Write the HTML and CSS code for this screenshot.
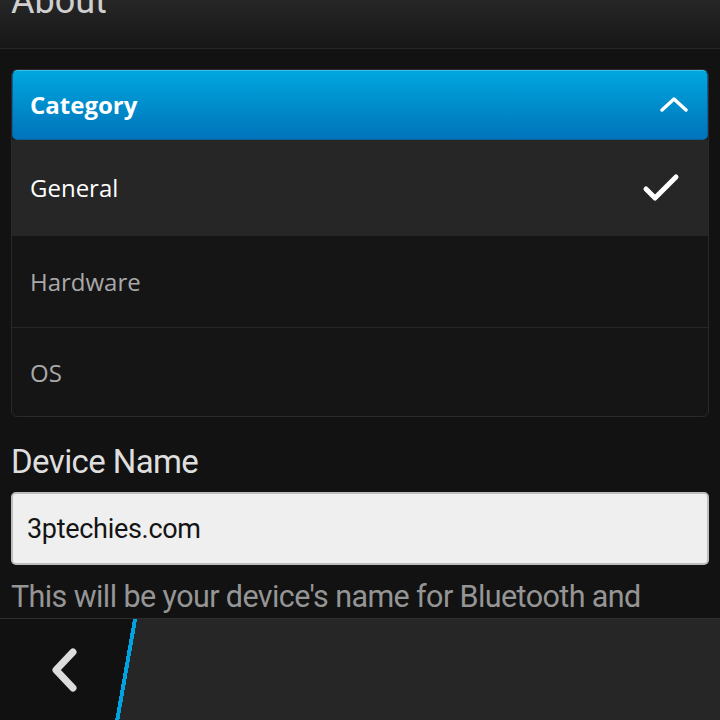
FILE: index.html
```html
<!DOCTYPE html>
<html lang="en">
<head>
    <meta charset="UTF-8">
    <meta name="viewport" content="width=device-width, initial-scale=1.0">
    <title>About</title>
    <link rel="stylesheet" href="styles.css">
</head>
<body>
    <div class="screen">
        <header class="title-bar">
            <h1 class="title-text">About</h1>
        </header>

        <main class="content">
            <div class="dropdown">
                <div class="dropdown-header">
                    <span>Category</span>
                    <svg class="chevron-up" width="28" height="18" viewBox="0 0 28 18">
                        <polyline points="2,15 14,4 26,15" fill="none" stroke="#fff" stroke-width="3.4" stroke-linecap="round" stroke-linejoin="round"></polyline>
                    </svg>
                </div>
                <div class="dropdown-item selected">
                    <span>General</span>
                    <svg class="check" width="38" height="30" viewBox="0 0 38 30">
                        <polyline points="4,16 13,25 34,4" fill="none" stroke="#fff" stroke-width="5" stroke-linecap="round" stroke-linejoin="round"></polyline>
                    </svg>
                </div>
                <div class="dropdown-item">
                    <span>Hardware</span>
                </div>
                <div class="dropdown-item last">
                    <span>OS</span>
                </div>
            </div>

            <div class="field">
                <label class="field-label" for="deviceName">Device Name</label>
                <input class="field-input" id="deviceName" type="text" value="3ptechies.com">
                <p class="field-hint">This will be your device's name for Bluetooth and</p>
            </div>
        </main>

        <footer class="action-bar">
            <div class="back-btn">
                <svg width="30" height="44" viewBox="0 0 30 44">
                    <polyline points="24,4 7,22 24,40" fill="none" stroke="#dcdcdc" stroke-width="7" stroke-linecap="round" stroke-linejoin="round"></polyline>
                </svg>
            </div>
            <div class="action-rest"></div>
        </footer>
    </div>
</body>
</html>
```

FILE: styles.css
```css
body {
    margin: 0;
    background-color: #121212;
    font-family: 'Open Sans', 'Noto Sans', sans-serif;
}

.screen {
    width: 720px;
    height: 720px;
    display: flex;
    flex-direction: column;
    overflow: hidden;
    background-color: #121212;
}

.title-bar {
    height: 48px;
    flex-shrink: 0;
    background: linear-gradient(#262626, #171717);
    border-bottom: 1px solid #262626;
    overflow: hidden;
}

.title-text {
    margin: -20px 0 0 11px;
    font-family: 'Roboto', sans-serif;
    font-size: 36px;
    font-weight: normal;
    line-height: 42px;
    color: #cfcfcf;
}

.content {
    flex: 1;
    padding: 20px 11px 0;
    overflow: hidden;
}

.dropdown {
    border: 1px solid #2a2a2a;
    border-radius: 6px;
    background-color: #151515;
    overflow: hidden;
}

.dropdown-header {
    height: 68px;
    display: flex;
    align-items: center;
    justify-content: space-between;
    padding: 0 19px 2px 17px;
    box-sizing: content-box;
    height: 66px;
    background: linear-gradient(#00a7de, #0073bb);
    border: 1px solid #0d5f93;
    border-top-color: #3cbbe8;
    border-radius: 5px;
    color: #fff;
    font-size: 24px;
    font-weight: bold;
}

.dropdown-item {
    height: 91px;
    display: flex;
    align-items: center;
    justify-content: space-between;
    padding: 0 28px 0 18px;
    font-size: 24px;
    color: #a9a9a9;
    border-top: 1px solid #262626;
}

.dropdown-item.selected {
    height: 95px;
    background-color: #262626;
    color: #fff;
    border-top: none;
}

.dropdown-item.last {
    height: 88px;
}

.field {
    margin-top: 25px;
}

.field-label {
    display: block;
    font-family: 'Roboto', sans-serif;
    font-size: 33px;
    letter-spacing: -0.6px;
    color: #dedede;
    line-height: 40px;
}

.field-input {
    display: block;
    box-sizing: border-box;
    width: 100%;
    height: 73px;
    margin-top: 10px;
    padding: 0 14px;
    border: 2px solid #bdbdbd;
    border-radius: 5px;
    background-color: #efefef;
    font-family: 'Roboto', sans-serif;
    font-size: 27px;
    letter-spacing: -0.3px;
    color: #141414;
    outline: none;
}

.field-hint {
    margin: 12px 0 0;
    font-family: 'Roboto', sans-serif;
    font-size: 30.5px;
    letter-spacing: -0.6px;
    line-height: 40px;
    color: #959595;
}

.action-bar {
    height: 101px;
    flex-shrink: 0;
    display: flex;
    border-top: 1px solid #2e2e2e;
    background: linear-gradient(100deg, #111 0, #111 131px, #00a3e0 131px, #00a3e0 135px, #262626 135px);
}

.back-btn {
    width: 130px;
    display: flex;
    align-items: center;
    padding-left: 49px;
    box-sizing: border-box;
}

.action-rest {
    flex: 1;
}
```
